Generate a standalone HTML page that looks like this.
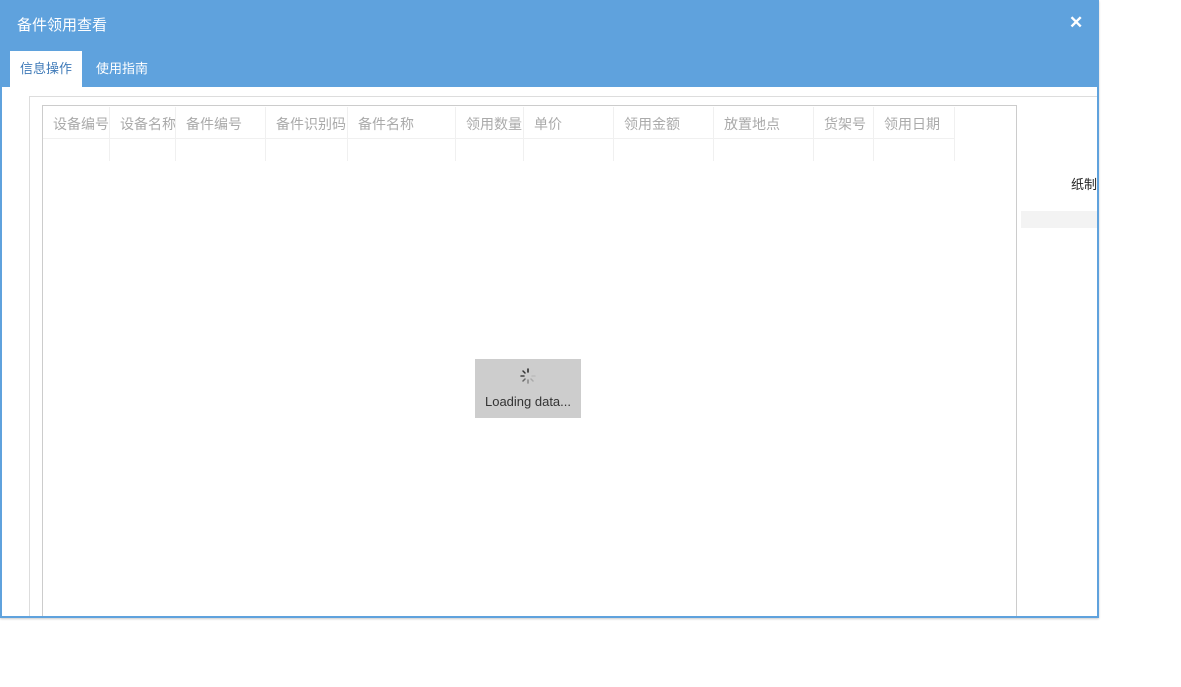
<!DOCTYPE html>
<html><head><meta charset="utf-8"><style>
*{margin:0;padding:0;box-sizing:border-box}
body{width:1181px;height:687px;background:#fff;position:relative;overflow:hidden;font-family:"Liberation Sans","Noto Sans CJK SC",sans-serif;font-size:13px}
.a{position:absolute}
.win{left:0;top:0;width:1099px;height:618px;border:2px solid #5fa2dd;border-top-width:1px;background:#fff;overflow:hidden;box-shadow:0 1px 2px #ccc}
.hd{left:0;top:0;width:1097px;height:86px;background:#5fa2dd}
.th{top:1px;height:32px;color:#aaa;font-size:14px;line-height:34px;padding-left:10px;border-right:1px solid #f0f0f0;white-space:nowrap;overflow:hidden}
.tc{top:33px;height:22px;border-right:1px solid #f0f0f0}
</style></head><body>
<div class="a win">
 <div class="a hd"></div>
 <div class="a" style="left:15px;top:13px;color:#fff;font-size:15px">备件领用查看</div>
 <div class="a" style="left:1067px;top:12px;color:#fff;font-size:17px;font-weight:bold">✕</div>
 <div class="a" style="left:8px;top:50px;width:72px;height:36px;background:#fff;color:#3f7ab8;line-height:36px;text-align:center">信息操作</div>
 <div class="a" style="left:94px;top:50px;height:36px;color:#fff;line-height:36px">使用指南</div>
 <div class="a" style="left:27px;top:95px;width:1080px;height:530px;border-left:1px solid #ddd;border-top:1px solid #ddd"></div>
 <div class="a" style="left:40px;top:104px;width:975px;height:520px;border:1px solid #ccc">
  <div class="a" style="left:0;top:32px;width:911px;border-top:1px solid #f0f0f0"></div>
  <div class="a th" style="left:0;width:67px">设备编号</div>
  <div class="a th" style="left:67px;width:66px">设备名称</div>
  <div class="a th" style="left:133px;width:90px">备件编号</div>
  <div class="a th" style="left:223px;width:82px">备件识别码</div>
  <div class="a th" style="left:305px;width:108px">备件名称</div>
  <div class="a th" style="left:413px;width:68px">领用数量</div>
  <div class="a th" style="left:481px;width:90px">单价</div>
  <div class="a th" style="left:571px;width:100px">领用金额</div>
  <div class="a th" style="left:671px;width:100px">放置地点</div>
  <div class="a th" style="left:771px;width:60px">货架号</div>
  <div class="a th" style="left:831px;width:81px">领用日期</div>
  <div class="a tc" style="left:0;width:67px"></div><div class="a tc" style="left:67px;width:66px"></div><div class="a tc" style="left:133px;width:90px"></div><div class="a tc" style="left:223px;width:82px"></div><div class="a tc" style="left:305px;width:108px"></div><div class="a tc" style="left:413px;width:68px"></div><div class="a tc" style="left:481px;width:90px"></div><div class="a tc" style="left:571px;width:100px"></div><div class="a tc" style="left:671px;width:100px"></div><div class="a tc" style="left:771px;width:60px"></div><div class="a tc" style="left:831px;width:81px"></div>
 </div>
 <div class="a" style="left:473px;top:358px;width:106px;height:59px;background:#cdcdcd">
  <svg class="a" style="left:44px;top:8px" width="18" height="18" viewBox="0 0 18 18"><g stroke-width="1.5" stroke-linecap="round">
   <line x1="9" y1="2" x2="9" y2="5" stroke="#222"/><line x1="4" y1="4" x2="6" y2="6" stroke="#333"/><line x1="2" y1="9" x2="5" y2="9" stroke="#444"/><line x1="4" y1="14" x2="6" y2="12" stroke="#666"/><line x1="9" y1="16" x2="9" y2="13" stroke="#888"/><line x1="14" y1="14" x2="12" y2="12" stroke="#aaa"/><line x1="16" y1="9" x2="13" y2="9" stroke="#bbb"/><line x1="14" y1="4" x2="12" y2="6" stroke="#ccc"/></g></svg>
  <div class="a" style="left:0;top:35px;width:106px;text-align:center;color:#333;font-size:13px">Loading data...</div>
 </div>
 <div class="a" style="left:1069px;top:173px;color:#222;font-size:13px;white-space:nowrap">纸制品</div>
 <div class="a" style="left:1019px;top:210px;width:80px;height:17px;background:#f3f3f3"></div>
</div>
</body></html>
